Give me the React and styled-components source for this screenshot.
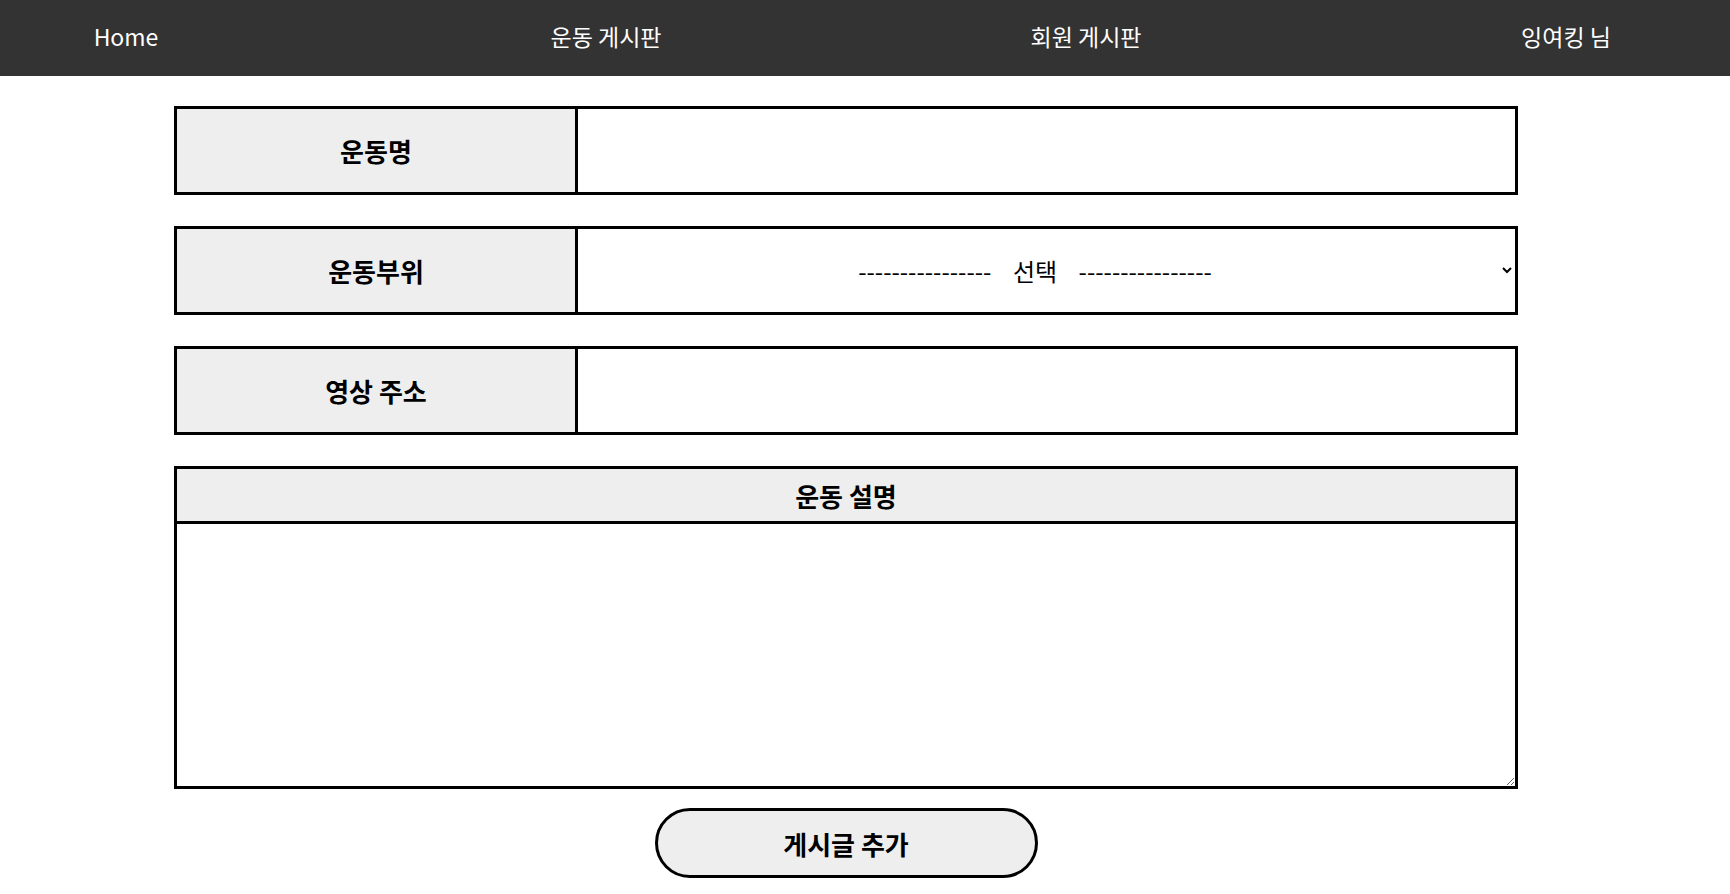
import React, { useState } from "react";
import styled, { createGlobalStyle } from "styled-components";

const GlobalStyle = createGlobalStyle`
	body {
		margin: 0;
		background: #ffffff;
		font-family: "Noto Sans CJK KR", "Noto Sans", sans-serif;
	}
`;

const menus = ["Home", "운동 게시판", "회원 게시판", "잉여킹 님"];

function App() {
	const [part, setPart] = useState("");

	return (
		<Page>
			<GlobalStyle />
			<Nav>
				{menus.map((v) => (
					<NavItem key={v}>{v}</NavItem>
				))}
			</Nav>
			<Form onSubmit={(e) => e.preventDefault()}>
				<Row>
					<Label>운동명</Label>
					<TextInput type="text" />
				</Row>
				<Row>
					<Label>운동부위</Label>
					<Select value={part} onChange={(e) => setPart(e.target.value)}>
						<option value="">
							{"----------------\u00a0\u00a0\u00a0\u00a0선택\u00a0\u00a0\u00a0\u00a0----------------"}
						</option>
						<option value="chest">가슴</option>
						<option value="back">등</option>
						<option value="leg">하체</option>
						<option value="shoulder">어깨</option>
						<option value="arm">팔</option>
					</Select>
				</Row>
				<Row>
					<Label>영상 주소</Label>
					<TextInput type="text" />
				</Row>
				<DescBox>
					<DescHeader>운동 설명</DescHeader>
					<TextArea />
				</DescBox>
				<SubmitButton type="submit">게시글 추가</SubmitButton>
			</Form>
		</Page>
	);
}

const Page = styled.div`
	width: 100%;
`;

const Nav = styled.nav`
	display: flex;
	justify-content: center;
	align-items: center;
	gap: 280px;
	height: 76px;
	padding-right: 38px;
	background-color: #333333;
`;

const NavItem = styled.div`
	width: 200px;
	text-align: center;
	color: #ffffff;
	font-size: 23px;
	line-height: 1;
	padding-bottom: 4px;
	cursor: pointer;
`;

const Form = styled.form`
	display: flex;
	flex-direction: column;
	align-items: center;
	gap: 31px;
	margin-top: 30px;
	padding-right: 38px;
`;

const Row = styled.div`
	display: flex;
	width: 1344px;
	height: 89px;
	box-sizing: border-box;
	border: 3px solid #000000;
`;

const Label = styled.div`
	display: flex;
	align-items: center;
	justify-content: center;
	width: 401px;
	flex-shrink: 0;
	box-sizing: border-box;
	border-right: 3px solid #000000;
	background-color: #eeeeee;
	font-size: 26px;
	font-weight: 700;
	color: #000000;
`;

const TextInput = styled.input`
	flex: 1;
	min-width: 0;
	border: none;
	outline: none;
	padding: 0 16px;
	font-family: inherit;
	font-size: 24px;
	background: #ffffff;
`;

const Select = styled.select`
	flex: 1;
	min-width: 0;
	border: none;
	outline: none;
	background: #ffffff;
	font-family: inherit;
	font-size: 24px;
	color: #000000;
	text-align: center;
	text-align-last: center;
	padding: 0 15px 0 4px;
`;

const DescBox = styled.div`
	display: flex;
	flex-direction: column;
	width: 1344px;
	height: 323px;
	box-sizing: border-box;
	border: 3px solid #000000;
`;

const DescHeader = styled.div`
	display: flex;
	align-items: center;
	justify-content: center;
	height: 55px;
	flex-shrink: 0;
	box-sizing: border-box;
	border-bottom: 3px solid #000000;
	background-color: #eeeeee;
	font-size: 26px;
	font-weight: 700;
`;

const TextArea = styled.textarea`
	flex: 1;
	border: none;
	outline: none;
	padding: 10px 14px;
	font-family: inherit;
	font-size: 20px;
	resize: both;
`;

const SubmitButton = styled.button`
	width: 383px;
	height: 70px;
	margin-top: -12px;
	box-sizing: border-box;
	border: 3px solid #000000;
	border-radius: 35px;
	background-color: #eeeeee;
	font-family: inherit;
	font-size: 26px;
	font-weight: 700;
	color: #000000;
	cursor: pointer;
`;

export default App;
